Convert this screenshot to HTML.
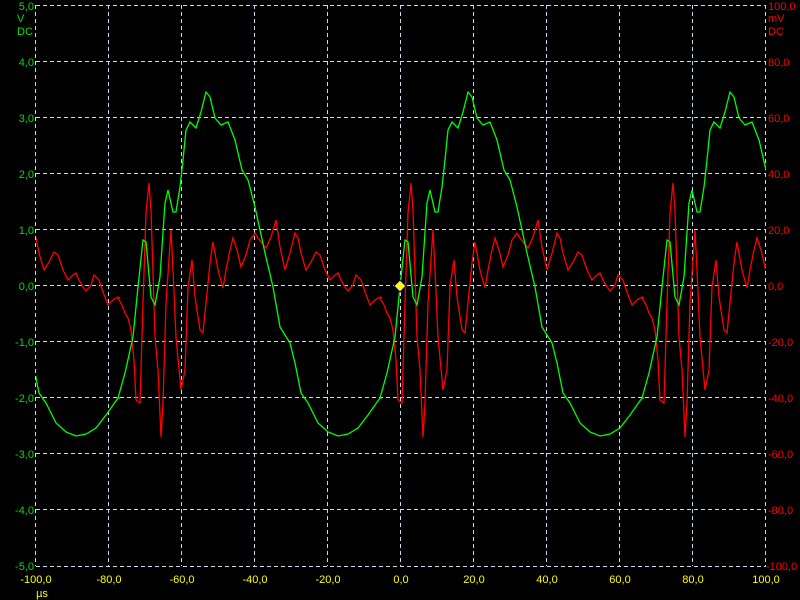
<!DOCTYPE html>
<html><head><meta charset="utf-8"><style>
html,body{margin:0;padding:0;background:#000;width:800px;height:600px;overflow:hidden}
svg{display:block}
text{font-family:"Liberation Sans",sans-serif;font-size:11px}
</style></head><body>
<svg width="800" height="600" viewBox="0 0 800 600" xmlns="http://www.w3.org/2000/svg">
<defs>
<clipPath id="pc"><rect x="36" y="5" width="730" height="561"/></clipPath>
<polyline id="red" fill="none" stroke="#ff0000" stroke-width="1.3" points="380,298 384,305 387,313 390,318 393,330 396,360 398,400 402,403 405,303 408,213 411,183 413,210 417,337 420,370 423,437 425,403 428,303 433,230 435,270 438,337 443,390 447,370 450,287 454,260 457,297 462,330 465,333 468,303 472,263 475,242 480,270 485,288 488,270 492,250 495,238 499,250 503,267 508,255 512,240 517,233 520,238 523,242 528,248 533,237 538,220 542,247 547,270 552,253 557,233 560,238 563,253 568,270 573,262 578,252 582,255 587,270 592,280 597,275 600,273 603,280 607,287 610,291 615,285 618,275 623,280 627,292 632,305 637,300 642,297 644,298"/>
<polyline id="grn" fill="none" stroke="#00ff00" stroke-width="1.3" points="380,398 387,373 395,337 400,287 405,240 408,242 413,297 417,305 422,277 427,203 430,190 435,212 438,212 442,187 445,160 448,130 452,122 458,128 463,112 468,92 472,97 477,118 483,125 490,122 497,140 504,170 510,180 517,207 527,253 535,287 542,327 547,335 552,343 557,363 563,393 570,403 580,423 590,432 600,436 610,434 620,428 630,415 642,398 644,398"/>
</defs>
<g stroke="#c4def0" stroke-width="1" stroke-dasharray="4 3" fill="none">
<path d="M35.5 5v561M108.5 5v561M181.5 5v561M254.5 5v561M327.5 5v561M400.5 5v561M473.5 5v561M546.5 5v561M619.5 5v561M692.5 5v561M765.5 5v561"/>
<path d="M36 5.5h730M36 61.5h730M36 117.5h730M36 173.5h730M36 229.5h730M36 285.5h730M36 341.5h730M36 397.5h730M36 453.5h730M36 509.5h730M36 566.5h730"/>
</g>
<g clip-path="url(#pc)">
<use href="#red" transform="translate(-524,0)"/><use href="#red" transform="translate(-262,0)"/><use href="#red"/><use href="#red" transform="translate(262,0)"/>
<use href="#grn" transform="translate(-524,0)"/><use href="#grn" transform="translate(-262,0)"/><use href="#grn"/><use href="#grn" transform="translate(262,0)"/>
</g>
<polygon points="400,280 406,286 400,292 394,286" fill="#ffff00" stroke="#000080" stroke-width="1"/>
<g fill="#00e000" text-anchor="end">
<text x="34" y="10">5,0</text><text x="34" y="66">4,0</text><text x="34" y="122">3,0</text><text x="34" y="178">2,0</text><text x="34" y="234">1,0</text><text x="34" y="290">0,0</text><text x="34" y="346">-1,0</text><text x="34" y="402">-2,0</text><text x="34" y="458">-3,0</text><text x="34" y="514">-4,0</text><text x="34" y="570">-5,0</text>
</g>
<g fill="#00e000"><text x="17" y="22">V</text><text x="17" y="35">DC</text></g>
<g fill="#ff0000">
<text x="768" y="10">100,0</text><text x="768" y="22">mV</text><text x="768" y="35">DC</text><text x="768" y="66">80,0</text><text x="768" y="122">60,0</text><text x="768" y="178">40,0</text><text x="768" y="234">20,0</text><text x="768" y="290">0,0</text><text x="768" y="346">-20,0</text><text x="768" y="402">-40,0</text><text x="768" y="458">-60,0</text><text x="768" y="514">-80,0</text><text x="766" y="570">-100,0</text>
</g>
<g fill="#ffff00" text-anchor="middle">
<text x="36" y="583">-100,0</text><text x="109" y="583">-80,0</text><text x="182" y="583">-60,0</text><text x="255" y="583">-40,0</text><text x="328" y="583">-20,0</text><text x="401" y="583">0,0</text><text x="474" y="583">20,0</text><text x="547" y="583">40,0</text><text x="620" y="583">60,0</text><text x="693" y="583">80,0</text><text x="766" y="583">100,0</text>
<text x="42" y="597">µs</text>
</g>
</svg>
</body></html>
